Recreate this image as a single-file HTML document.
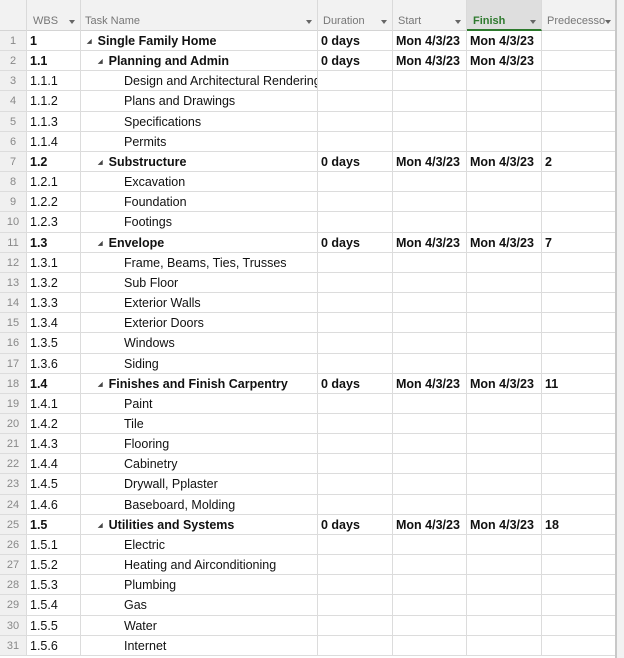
<!DOCTYPE html><html><head><style>
*{margin:0;padding:0;box-sizing:border-box}
body{width:624px;height:658px;background:#fff;font-family:"Liberation Sans",sans-serif;overflow:hidden;position:relative}
.hdr{position:absolute;left:0;top:0;width:616px;height:31px;background:#f2f2f2;border-bottom:1px solid #d4d4d4}
.h{position:absolute;top:0;height:31px;border-right:1px solid #dadada;color:#777;font-size:11px;padding:15px 0 0 4px}
.h .dd{position:absolute;right:5px;top:20px;width:0;height:0;border-left:3.5px solid transparent;border-right:3.5px solid transparent;border-top:4px solid #666}
.grid{position:absolute;left:0;top:31px;width:616px;display:grid;grid-template-columns:27px 54px 237px 75px 74px 75px 74px;grid-auto-rows:20.17px;font-size:12.5px;color:#111}
.grid div{border-right:1px solid #dcdcdc;border-bottom:1px solid #dcdcdc;white-space:nowrap;overflow:hidden;padding:4px 0 0 3px;line-height:13px}
.grid .n{background:#f0f0f0;color:#888;font-size:11px;text-align:center;padding-left:0}
.b{font-weight:bold}
.t1{padding-left:6px!important}.t2{padding-left:17px!important}.t3{padding-left:43px!important}
.tri{font-size:6px;vertical-align:2px;margin-right:6px;color:#444}
.rs{position:absolute;left:615px;top:0;width:2px;height:658px;background:#c8c8c8}
.rg{position:absolute;left:617px;top:0;width:7px;height:658px;background:#f2f2f2}
</style></head><body>
<div class="hdr">
<div class="h" style="left:0;width:27px"></div>
<div class="h" style="left:27px;width:54px;padding-left:6px">WBS<span class="dd"></span></div>
<div class="h" style="left:81px;width:237px">Task Name<span class="dd"></span></div>
<div class="h" style="left:318px;width:75px;padding-left:5px">Duration<span class="dd"></span></div>
<div class="h" style="left:393px;width:74px;padding-left:5px">Start<span class="dd"></span></div>
<div class="h" style="left:467px;width:75px;padding-left:6px;background:#dedede;color:#2e7a2e;font-weight:bold;border-bottom:2px solid #2e7a2e">Finish<span class="dd"></span></div>
<div class="h" style="left:542px;width:74px;padding-left:5px">Predecesso<span class="dd" style="right:4px"></span></div>
</div>
<div class="grid">
<div class="n">1</div><div class="b">1</div><div class="b t1"><span class="tri">◢</span>Single Family Home</div><div class="b">0 days</div><div class="b">Mon 4/3/23</div><div class="b">Mon 4/3/23</div><div></div>
<div class="n">2</div><div class="b">1.1</div><div class="b t2"><span class="tri">◢</span>Planning and Admin</div><div class="b">0 days</div><div class="b">Mon 4/3/23</div><div class="b">Mon 4/3/23</div><div></div>
<div class="n">3</div><div>1.1.1</div><div class="t3">Design and Architectural Rendering</div><div></div><div></div><div></div><div></div>
<div class="n">4</div><div>1.1.2</div><div class="t3">Plans and Drawings</div><div></div><div></div><div></div><div></div>
<div class="n">5</div><div>1.1.3</div><div class="t3">Specifications</div><div></div><div></div><div></div><div></div>
<div class="n">6</div><div>1.1.4</div><div class="t3">Permits</div><div></div><div></div><div></div><div></div>
<div class="n">7</div><div class="b">1.2</div><div class="b t2"><span class="tri">◢</span>Substructure</div><div class="b">0 days</div><div class="b">Mon 4/3/23</div><div class="b">Mon 4/3/23</div><div class="b">2</div>
<div class="n">8</div><div>1.2.1</div><div class="t3">Excavation</div><div></div><div></div><div></div><div></div>
<div class="n">9</div><div>1.2.2</div><div class="t3">Foundation</div><div></div><div></div><div></div><div></div>
<div class="n">10</div><div>1.2.3</div><div class="t3">Footings</div><div></div><div></div><div></div><div></div>
<div class="n">11</div><div class="b">1.3</div><div class="b t2"><span class="tri">◢</span>Envelope</div><div class="b">0 days</div><div class="b">Mon 4/3/23</div><div class="b">Mon 4/3/23</div><div class="b">7</div>
<div class="n">12</div><div>1.3.1</div><div class="t3">Frame, Beams, Ties, Trusses</div><div></div><div></div><div></div><div></div>
<div class="n">13</div><div>1.3.2</div><div class="t3">Sub Floor</div><div></div><div></div><div></div><div></div>
<div class="n">14</div><div>1.3.3</div><div class="t3">Exterior Walls</div><div></div><div></div><div></div><div></div>
<div class="n">15</div><div>1.3.4</div><div class="t3">Exterior Doors</div><div></div><div></div><div></div><div></div>
<div class="n">16</div><div>1.3.5</div><div class="t3">Windows</div><div></div><div></div><div></div><div></div>
<div class="n">17</div><div>1.3.6</div><div class="t3">Siding</div><div></div><div></div><div></div><div></div>
<div class="n">18</div><div class="b">1.4</div><div class="b t2"><span class="tri">◢</span>Finishes and Finish Carpentry</div><div class="b">0 days</div><div class="b">Mon 4/3/23</div><div class="b">Mon 4/3/23</div><div class="b">11</div>
<div class="n">19</div><div>1.4.1</div><div class="t3">Paint</div><div></div><div></div><div></div><div></div>
<div class="n">20</div><div>1.4.2</div><div class="t3">Tile</div><div></div><div></div><div></div><div></div>
<div class="n">21</div><div>1.4.3</div><div class="t3">Flooring</div><div></div><div></div><div></div><div></div>
<div class="n">22</div><div>1.4.4</div><div class="t3">Cabinetry</div><div></div><div></div><div></div><div></div>
<div class="n">23</div><div>1.4.5</div><div class="t3">Drywall, Pplaster</div><div></div><div></div><div></div><div></div>
<div class="n">24</div><div>1.4.6</div><div class="t3">Baseboard, Molding</div><div></div><div></div><div></div><div></div>
<div class="n">25</div><div class="b">1.5</div><div class="b t2"><span class="tri">◢</span>Utilities and Systems</div><div class="b">0 days</div><div class="b">Mon 4/3/23</div><div class="b">Mon 4/3/23</div><div class="b">18</div>
<div class="n">26</div><div>1.5.1</div><div class="t3">Electric</div><div></div><div></div><div></div><div></div>
<div class="n">27</div><div>1.5.2</div><div class="t3">Heating and Airconditioning</div><div></div><div></div><div></div><div></div>
<div class="n">28</div><div>1.5.3</div><div class="t3">Plumbing</div><div></div><div></div><div></div><div></div>
<div class="n">29</div><div>1.5.4</div><div class="t3">Gas</div><div></div><div></div><div></div><div></div>
<div class="n">30</div><div>1.5.5</div><div class="t3">Water</div><div></div><div></div><div></div><div></div>
<div class="n">31</div><div>1.5.6</div><div class="t3">Internet</div><div></div><div></div><div></div><div></div>
</div>
<div class="rs"></div><div class="rg"></div>
</body></html>
